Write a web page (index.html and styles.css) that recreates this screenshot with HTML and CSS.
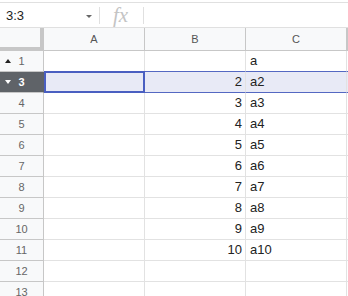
FILE: index.html
```html
<!DOCTYPE html>
<html>
<head>
<meta charset="utf-8">
<link rel="stylesheet" href="styles.css">
</head>
<body>
<div class="fbar">
  <div class="namebox"><span class="nbtext">3:3</span><span class="caret"></span></div>
  <div class="fx">fx</div>
  <div class="finput"></div>
</div>
<div class="grid">
  <div class="hrow">
    <div class="corner"></div>
    <div class="ch">A</div>
    <div class="ch">B</div>
    <div class="ch">C</div>
    <div class="ch rest"></div>
  </div>
  <div class="row"><div class="rh"><span class="tri up"></span>1</div><div class="c"></div><div class="c num"></div><div class="c">a</div><div class="c rest"></div></div>
  <div class="row sel"><div class="rh"><span class="tri down"></span>3</div><div class="c active"></div><div class="c num">2</div><div class="c">a2</div><div class="c rest"></div></div>
  <div class="row"><div class="rh">4</div><div class="c"></div><div class="c num">3</div><div class="c">a3</div><div class="c rest"></div></div>
  <div class="row"><div class="rh">5</div><div class="c"></div><div class="c num">4</div><div class="c">a4</div><div class="c rest"></div></div>
  <div class="row"><div class="rh">6</div><div class="c"></div><div class="c num">5</div><div class="c">a5</div><div class="c rest"></div></div>
  <div class="row"><div class="rh">7</div><div class="c"></div><div class="c num">6</div><div class="c">a6</div><div class="c rest"></div></div>
  <div class="row"><div class="rh">8</div><div class="c"></div><div class="c num">7</div><div class="c">a7</div><div class="c rest"></div></div>
  <div class="row"><div class="rh">9</div><div class="c"></div><div class="c num">8</div><div class="c">a8</div><div class="c rest"></div></div>
  <div class="row"><div class="rh">10</div><div class="c"></div><div class="c num">9</div><div class="c">a9</div><div class="c rest"></div></div>
  <div class="row"><div class="rh">11</div><div class="c"></div><div class="c num">10</div><div class="c">a10</div><div class="c rest"></div></div>
  <div class="row"><div class="rh">12</div><div class="c"></div><div class="c num"></div><div class="c"></div><div class="c rest"></div></div>
  <div class="row"><div class="rh">13</div><div class="c"></div><div class="c num"></div><div class="c"></div><div class="c rest"></div></div>
</div>
</body>
</html>
```
FILE: styles.css
```css
html, body {
  margin: 0;
  padding: 0;
  background: #fff;
  overflow: hidden;
  font-family: "Liberation Sans", Arial, sans-serif;
}
.fbar {
  margin-top: 2px;
  height: 24px;
  border-top: 1px solid #e0e0e0;
  border-bottom: 1px solid #e0e0e0;
  display: flex;
  align-items: center;
}
.namebox {
  width: 100px;
  height: 17px;
  display: flex;
  align-items: center;
  border-right: 1px solid #e0e0e0;
  box-sizing: border-box;
}
.nbtext {
  flex: 1;
  padding-left: 6px;
  font-size: 13px;
  color: #222;
}
.caret {
  width: 0;
  height: 0;
  border-left: 3px solid transparent;
  border-right: 3px solid transparent;
  border-top: 3px solid #666;
  margin-right: 7px;
  margin-top: 2px;
}
.fx {
  width: 44px;
  height: 17px;
  box-sizing: border-box;
  border-right: 1px solid #e0e0e0;
  font-family: "Liberation Serif", serif;
  font-style: italic;
  font-size: 21px;
  line-height: 17px;
  color: #c4c4c4;
  padding-left: 13px;
}
.finput { flex: 1; }

.grid { display: flex; flex-direction: column; }
.hrow, .row { display: flex; flex-shrink: 0; }
.hrow { height: 23px; }
.row { height: 21px; }

.corner {
  width: 44px;
  flex-shrink: 0;
  box-sizing: border-box;
  background: #f8f9fa;
  border-right: 4px solid #c7c7c7;
  border-bottom: 4px solid #c7c7c7;
}
.ch {
  width: 101px;
  flex-shrink: 0;
  box-sizing: border-box;
  background: #f8f9fa;
  border-right: 1px solid #c7c7c7;
  border-bottom: 1px solid #c7c7c7;
  font-size: 11px;
  color: #555;
  text-align: center;
  line-height: 22px;
}
.ch.rest, .c.rest { flex: 1; width: auto; }

.rh {
  position: relative;
  width: 44px;
  flex-shrink: 0;
  box-sizing: border-box;
  background: #f8f9fa;
  border-right: 1px solid #c7c7c7;
  border-bottom: 1px solid #c7c7c7;
  font-size: 11px;
  color: #666;
  text-align: center;
  line-height: 20px;
}
.c {
  width: 101px;
  flex-shrink: 0;
  box-sizing: border-box;
  border-right: 1px solid #e2e2e2;
  border-bottom: 1px solid #e2e2e2;
  font-size: 13px;
  color: #222;
  line-height: 20px;
  padding: 0 4px;
  white-space: nowrap;
}
.c.num { text-align: right; padding-right: 3px; }

.tri {
  position: absolute;
  left: 5px;
  top: 8px;
  width: 0;
  height: 0;
  border-left: 3px solid transparent;
  border-right: 3px solid transparent;
}
.tri.up { border-bottom: 4px solid #222; }
.tri.down { border-top: 4px solid #fff; }

.row.sel .rh {
  background: #5f6368;
  color: #fff;
  font-weight: bold;
  border-right-color: #5f6368;
}
.row.sel .c {
  background: #e8eaf6;
  border-top: 1px solid #5468c2;
  border-bottom: 1px solid #5468c2;
  margin-top: -1px;
  height: 22px;
  line-height: 20px;
}
.row.sel .c.active {
  border: 2px solid #4a5fc1;
  line-height: 18px;
}
```
